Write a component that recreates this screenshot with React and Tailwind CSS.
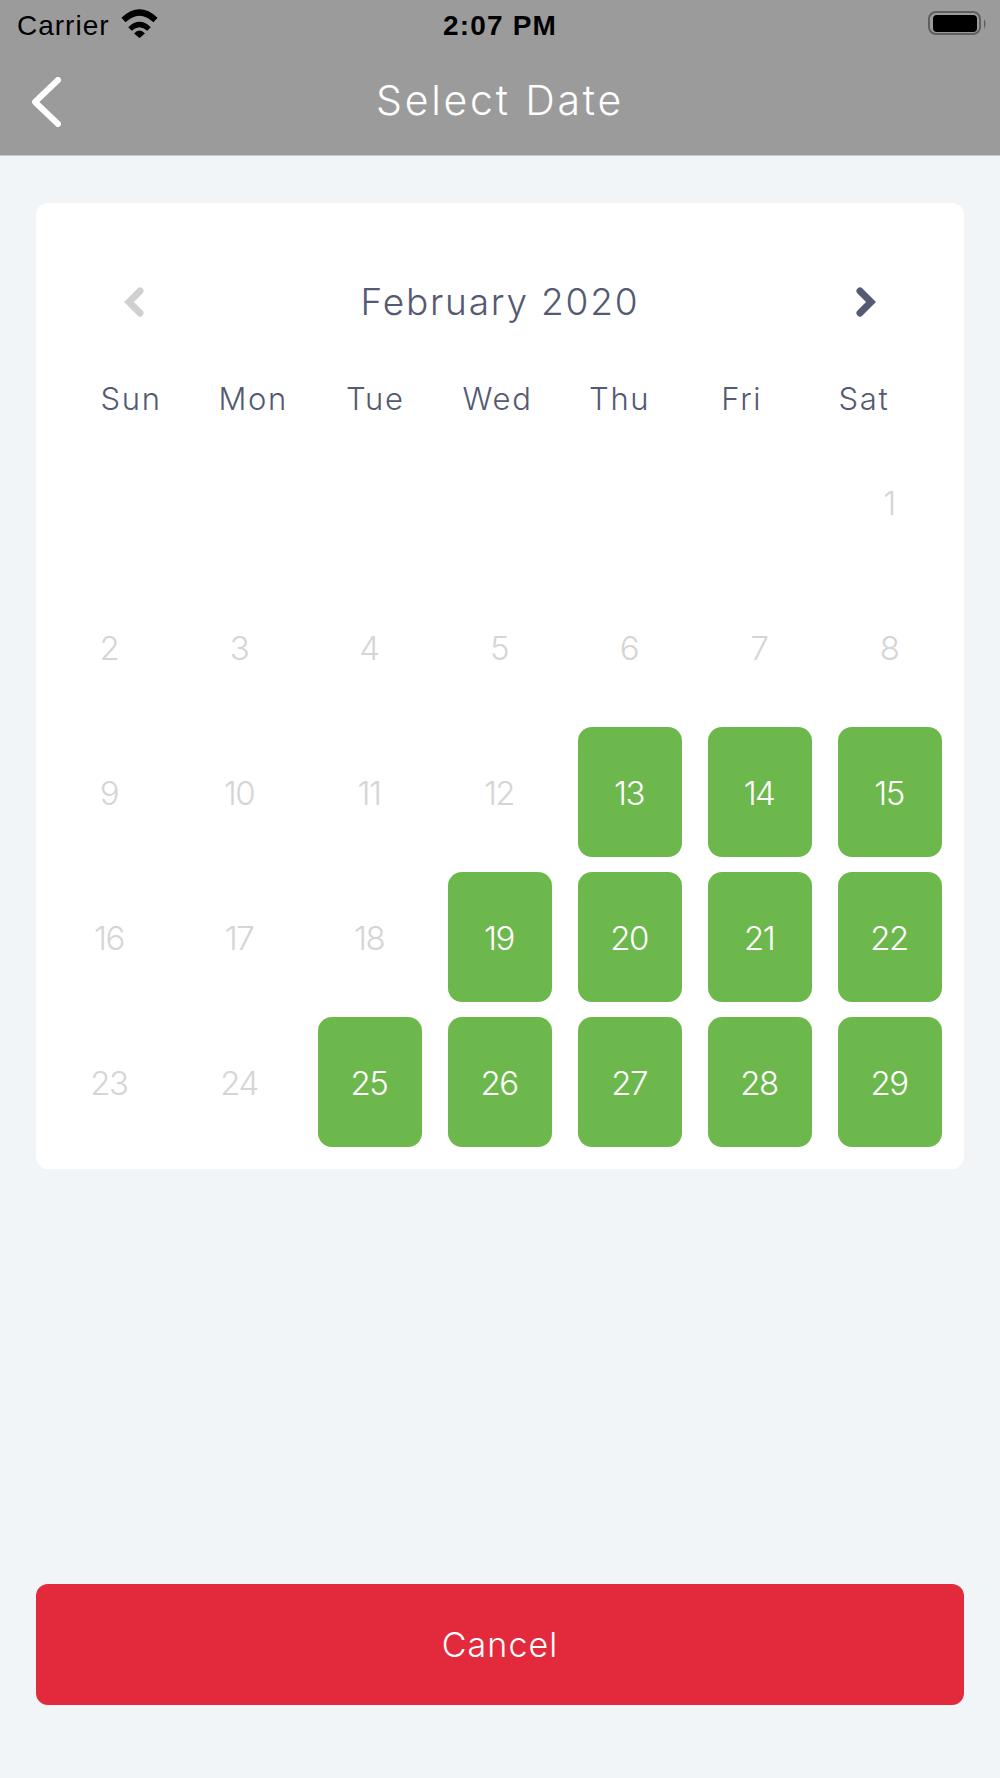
const days = [
  [null, null, null, null, null, null, 1],
  [2, 3, 4, 5, 6, 7, 8],
  [9, 10, 11, 12, 13, 14, 15],
  [16, 17, 18, 19, 20, 21, 22],
  [23, 24, 25, 26, 27, 28, 29],
];
const weekdays = ["Sun", "Mon", "Tue", "Wed", "Thu", "Fri", "Sat"];
const available = new Set([13, 14, 15, 19, 20, 21, 22, 25, 26, 27, 28, 29]);

function Wifi() {
  return (
    <svg width="37" height="29" viewBox="0 0 37 29" className="ml-[11px] -mt-[5px]">
      <path d="M13 24.5 Q18.5 18.5 24 24.5 L18.5 29 Z" fill="#000" />
      <path d="M9 20 Q18.5 11 28 20" fill="none" stroke="#000" strokeWidth="5" />
      <path d="M2.5 11 Q18.5 -4 34.5 11" fill="none" stroke="#000" strokeWidth="6" />
    </svg>
  );
}

function Battery() {
  return (
    <svg width="59" height="24" viewBox="0 0 59 24" className="-mt-[6px]">
      <rect x="1" y="1" width="51" height="22" rx="7" fill="none" stroke="#5f5f5f" strokeWidth="2" />
      <rect x="5" y="4" width="44" height="17" rx="4" fill="#000" />
      <path d="M56 8 Q59 12 56 18 Z" fill="#5f5f5f" />
    </svg>
  );
}

function Chevron({ color, flip }) {
  return (
    <svg width="20" height="30" viewBox="0 0 20 30" className={flip ? "-scale-x-100" : ""}>
      <path d="M16 4 L5 15 L16 26" fill="none" stroke={color} strokeWidth="7" strokeLinecap="round" strokeLinejoin="miter" />
    </svg>
  );
}

export default function App() {
  return (
    <div className="w-[1000px] h-[1778px] flex flex-col bg-[#f1f5f8] font-['Inter',sans-serif]">
      <header className="h-[156px] shrink-0 bg-[#9b9b9b] flex flex-col border-b border-[#c4cacf]">
        <div className="relative h-[52px] flex items-center justify-between pl-[17px] pr-[13px] text-black">
          <div className="flex items-center">
            <span className="text-[28px] tracking-[1px] font-['Liberation_Sans',sans-serif]">Carrier</span>
            <Wifi />
          </div>
          <span className="absolute left-0 right-0 text-center text-[28px] tracking-[1.2px] font-bold font-['Liberation_Sans',sans-serif]">2:07 PM</span>
          <Battery />
        </div>
        <div className="relative flex-1 flex items-center justify-center">
          <svg width="30" height="50" viewBox="0 0 30 50" className="absolute left-[31px] top-[25px]">
            <path d="M27 3 L4 25 L27 47" fill="none" stroke="#fff" strokeWidth="6" strokeLinecap="round" strokeLinejoin="round" />
          </svg>
          <h1 className="text-[41px] font-light text-white tracking-[2.8px] -mt-[5px]">Select Date</h1>
        </div>
      </header>

      <main className="flex-1 flex flex-col justify-between px-[36px] pt-[47px] pb-[73px]">
        <section className="h-[966px] bg-white rounded-[12px] px-[22px] pt-[69px]">
          <div className="h-[60px] flex items-center justify-between px-[66px]">
            <Chevron color="#d0d0d0" />
            <span className="text-[37px] font-[350] tracking-[1.8px] text-[#535a72]">February 2020</span>
            <Chevron color="#535a72" flip />
          </div>
          <div className="grid grid-cols-7 mt-[44px] mb-[21px] h-[40px] pl-[12px] pr-[17px] items-center text-center text-[31px] font-[350] tracking-[1.7px] text-[#535a72]">
            {weekdays.map((d) => (
              <span key={d}>{d}</span>
            ))}
          </div>
          <div className="grid grid-cols-7 gap-x-[26px] gap-y-[15px]">
            {days.flat().map((d, i) => (
              <div
                key={i}
                className={
                  available.has(d)
                    ? "h-[130px] flex items-center justify-center rounded-[14px] bg-[#6db84c] pt-[3px] pr-[2px] text-white text-[33px] tracking-[-1.5px] font-light"
                    : "h-[130px] flex items-center justify-center pt-[3px] pr-[2px] text-[#d5d5d5] text-[33px] tracking-[-1.5px] font-light"
                }
              >
                {d}
              </div>
            ))}
          </div>
        </section>

        <button className="h-[121px] w-full rounded-[12px] bg-[#e3293c] text-white text-[34px] tracking-[1.1px] font-light">Cancel</button>
      </main>
    </div>
  );
}
